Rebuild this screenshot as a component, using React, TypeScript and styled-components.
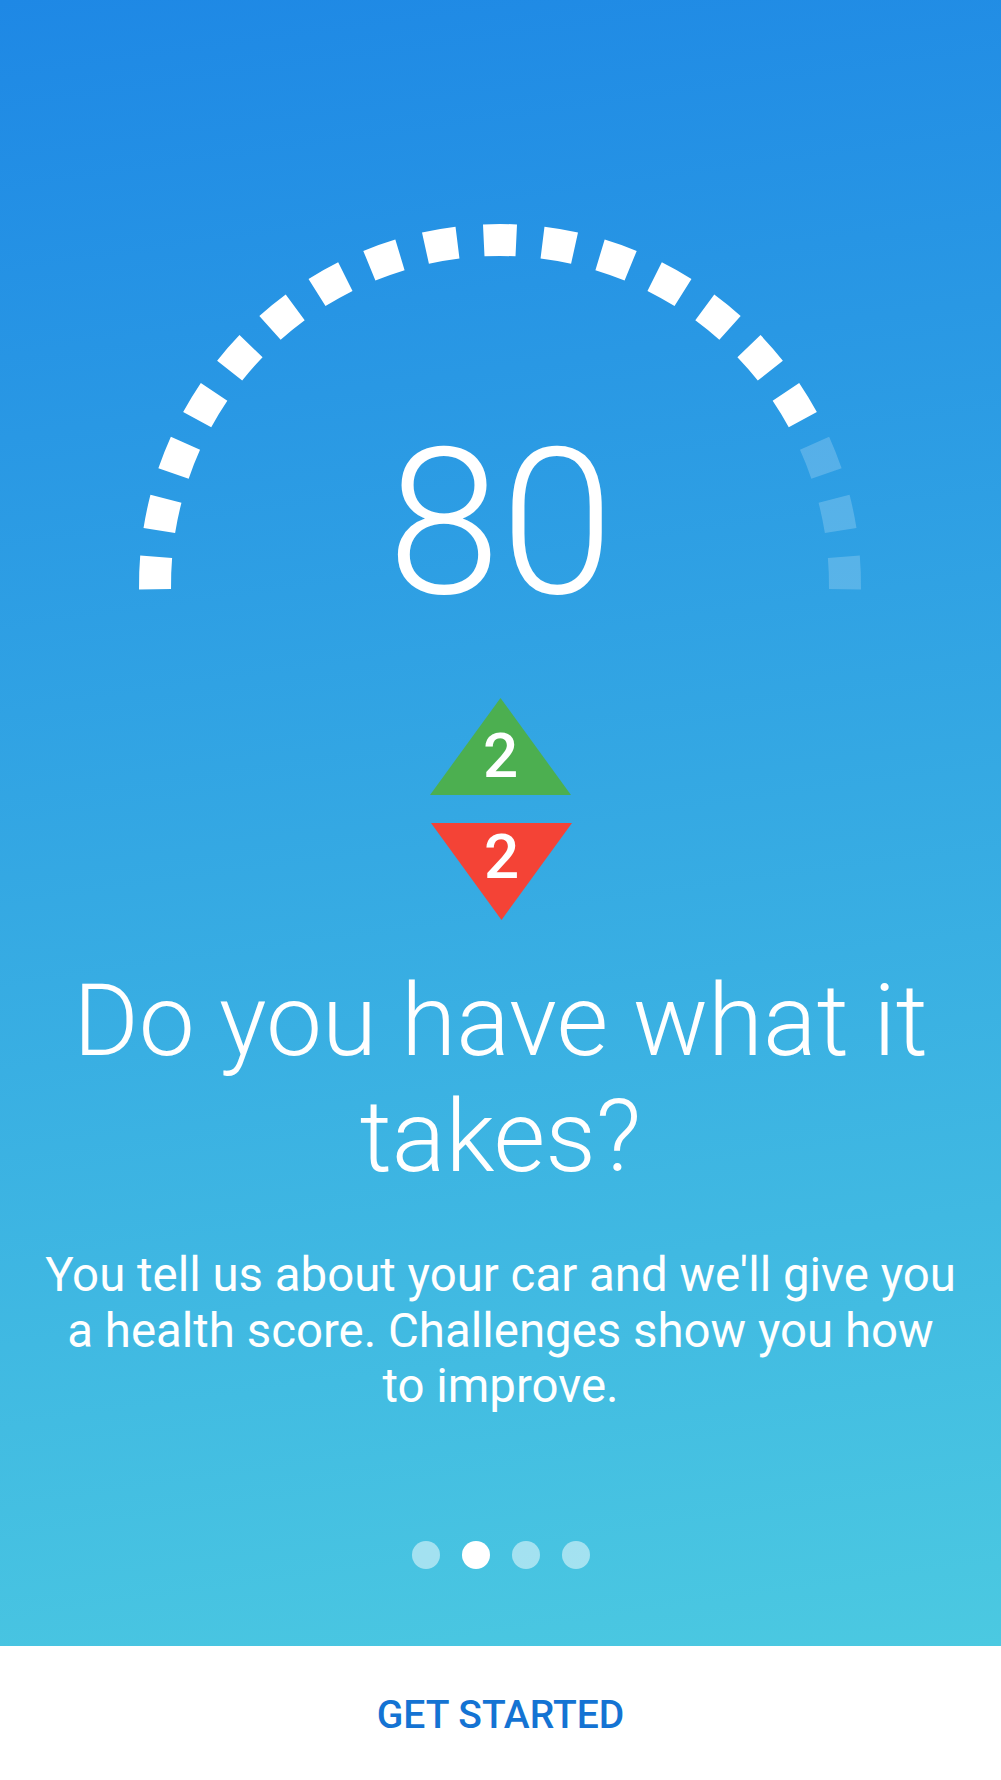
import React, { FC } from 'react'
import styled, { createGlobalStyle } from 'styled-components'

const GlobalStyle = createGlobalStyle`
    html, body {
        margin: 0;
        padding: 0;
        background: #fff;
    }
`

const Screen = styled.div`
    width: 1001px;
    height: 1780px;
    display: flex;
    flex-direction: column;
    font-family: Roboto, "Liberation Sans", sans-serif;
    color: #fff;
`

const Hero = styled.div`
    flex: 1;
    display: flex;
    flex-direction: column;
    align-items: center;
    padding-top: 224px;
    box-sizing: border-box;
    background: linear-gradient(172deg, #1e88e5 0%, #4bc9e1 100%);
`

const Gauge = styled.div`
    position: relative;
    width: 722px;
    height: 365px;
`

const GaugeArcs = styled.svg`
    display: block;
    width: 722px;
    height: 365px;
    overflow: visible;
`

const Score = styled.div`
    position: absolute;
    left: 0;
    right: 0;
    top: 194px;
    text-align: center;
    font-size: 204px;
    font-weight: 300;
    line-height: 212px;
`

const Badges = styled.div`
    margin-top: 109px;
    display: flex;
    flex-direction: column;
    align-items: center;
    gap: 28px;
`

const Badge = styled.div<{ $down?: boolean }>`
    width: 141px;
    height: 97px;
    margin-left: ${p => (p.$down ? '2px' : '0')};
    display: flex;
    justify-content: center;
    box-sizing: border-box;
    padding-top: ${p => (p.$down ? '3px' : '27px')};
    font-size: 62px;
    font-weight: 500;
    line-height: 62px;
    background: ${p => (p.$down ? '#f44336' : '#4caf50')};
    clip-path: ${p =>
        p.$down
            ? 'polygon(0 0, 100% 0, 50% 100%)'
            : 'polygon(50% 0, 100% 100%, 0 100%)'};
`

const Title = styled.h1`
    margin: 43px 0 0;
    width: 900px;
    text-align: center;
    font-size: 100px;
    font-weight: 300;
    line-height: 116px;
`

const Body = styled.p`
    margin: 53px 0 0;
    width: 915px;
    text-align: center;
    font-size: 47.4px;
    font-weight: 400;
    line-height: 55.5px;
`

const Dots = styled.div`
    margin-top: auto;
    margin-bottom: 77px;
    display: flex;
    gap: 22px;
`

const Dot = styled.span<{ $active?: boolean }>`
    width: 28px;
    height: 28px;
    border-radius: 50%;
    background: #fff;
    opacity: ${p => (p.$active ? 1 : 0.5)};
`

const Footer = styled.div`
    height: 134px;
    flex-shrink: 0;
    box-sizing: border-box;
    padding-top: 3px;
    display: flex;
    align-items: center;
    justify-content: center;
    background: #fff;
    color: #1473d3;
    font-size: 39px;
    font-weight: 500;
`

const CX = 360
const CY = 361
const OUTER = 361
const INNER = 329
const SEGMENTS = 19
const FIRST = 2
const HALF = 2.7

// one ring piece, angle in degrees counted from the left end of the arc
const segmentPath = (angle: number) => {
    const pt = (r: number, deg: number) => {
        const a = (deg * Math.PI) / 180
        return `${(CX - r * Math.cos(a)).toFixed(2)} ${(CY - r * Math.sin(a)).toFixed(2)}`
    }
    const a = angle - HALF
    const b = angle + HALF
    return `M${pt(OUTER, a)} A${OUTER} ${OUTER} 0 0 1 ${pt(OUTER, b)} L${pt(INNER, b)} A${INNER} ${INNER} 0 0 0 ${pt(INNER, a)} Z`
}

const step = (180 - 2 * FIRST) / (SEGMENTS - 1)
const segments = Array.from({ length: SEGMENTS }, (_, i) => FIRST + i * step)

const App: FC = () => {
    return (
        <Screen>
            <GlobalStyle />
            <Hero>
                <Gauge>
                    <GaugeArcs viewBox="0 0 722 365">
                        {segments.map((angle, i) => (
                            <path
                                key={i}
                                d={segmentPath(angle)}
                                fill="#fff"
                                fillOpacity={i >= SEGMENTS - 3 ? 0.2 : 1}
                            />
                        ))}
                    </GaugeArcs>
                    <Score>80</Score>
                </Gauge>
                <Badges>
                    <Badge>2</Badge>
                    <Badge $down>2</Badge>
                </Badges>
                <Title>Do you have what it takes?</Title>
                <Body>You tell us about your car and we'll give you a health score. Challenges show you how to improve.</Body>
                <Dots>
                    <Dot />
                    <Dot $active />
                    <Dot />
                    <Dot />
                </Dots>
            </Hero>
            <Footer>GET STARTED</Footer>
        </Screen>
    )
}

export default App
